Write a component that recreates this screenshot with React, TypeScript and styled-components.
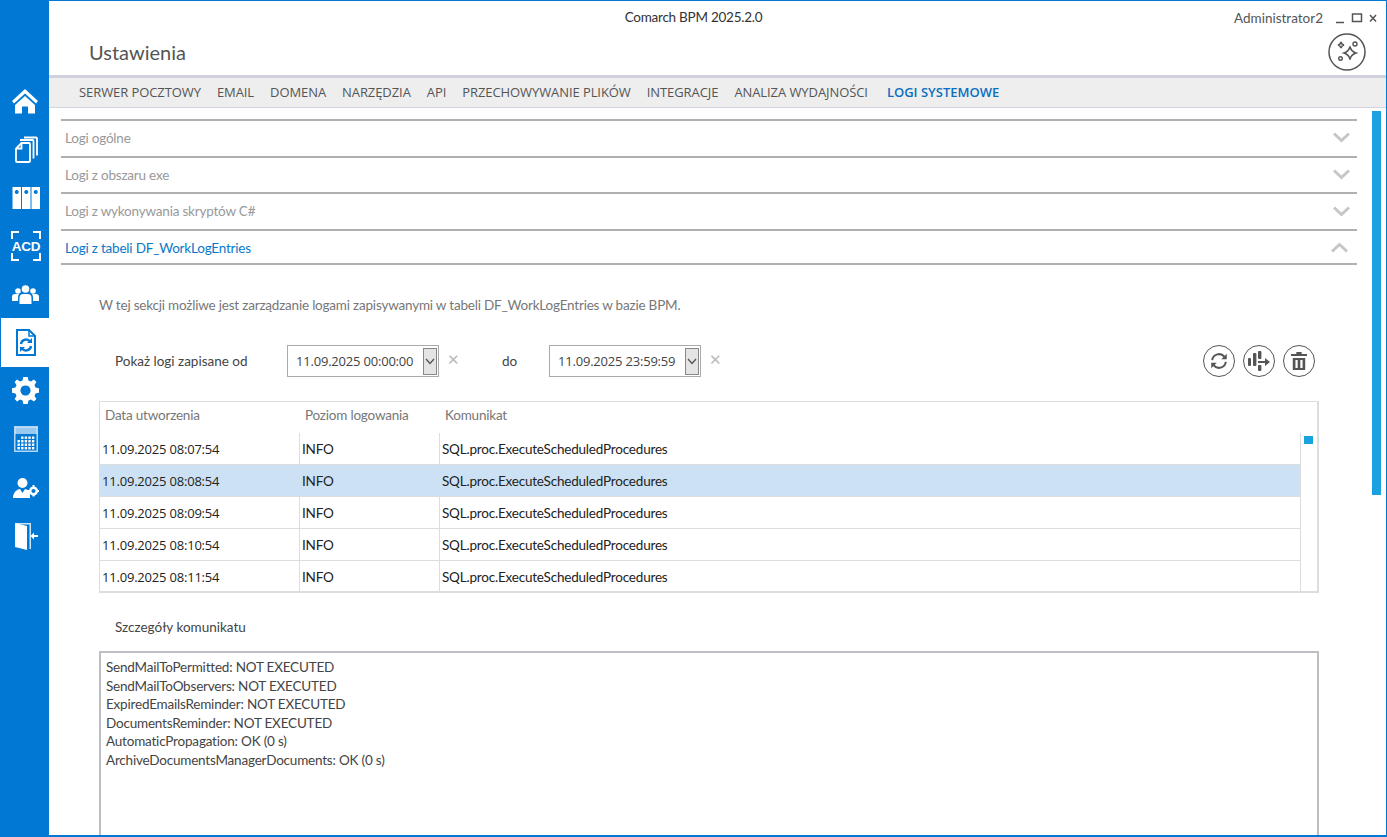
import React from "react";
import styled, { createGlobalStyle } from "styled-components";

const BLUE = "#0078d4";
const FONT = `Lato, "Open Sans", "Liberation Sans", sans-serif`;
const NARROW_FONT = `"Open Sans", "Noto Sans", "Liberation Sans", sans-serif`;

const GlobalStyle = createGlobalStyle`
  html, body {
    margin: 0;
    padding: 0;
    background: #fff;
    overflow: hidden;
  }
  * {
    box-sizing: border-box;
  }
`;

const tabs = [
  "SERWER POCZTOWY",
  "EMAIL",
  "DOMENA",
  "NARZĘDZIA",
  "API",
  "PRZECHOWYWANIE PLIKÓW",
  "INTEGRACJE",
  "ANALIZA WYDAJNOŚCI",
  "LOGI SYSTEMOWE",
];

const sections = [
  { title: "Logi ogólne", open: false },
  { title: "Logi z obszaru exe", open: false },
  { title: "Logi z wykonywania skryptów C#", open: false },
  { title: "Logi z tabeli DF_WorkLogEntries", open: true },
];

const rows = [
  "11.09.2025 08:07:54",
  "11.09.2025 08:08:54",
  "11.09.2025 08:09:54",
  "11.09.2025 08:10:54",
  "11.09.2025 08:11:54",
];

const details = [
  "SendMailToPermitted: NOT EXECUTED",
  "SendMailToObservers: NOT EXECUTED",
  "ExpiredEmailsReminder: NOT EXECUTED",
  "DocumentsReminder: NOT EXECUTED",
  "AutomaticPropagation: OK (0 s)",
  "ArchiveDocumentsManagerDocuments: OK (0 s)",
];

const HomeIcon = () => (
  <svg width="28" height="26" viewBox="1 0 28 26">
    <path d="M14 1 L27 13 L25 15.5 L14 5.5 L3 15.5 L1 13 Z" fill="#fff" />
    <path d="M14 8 L24 17 V25.5 H17 V18.5 H11 V25.5 H4 V17 Z" fill="#fff" />
  </svg>
);

const DocsIcon = () => (
  <svg width="24" height="27" viewBox="0 0 24 27" fill="none" stroke="#fff" strokeWidth="1.8">
    <path d="M7.5 7 L2 12.5 V25 a1 1 0 0 0 1 1 H15 a1 1 0 0 0 1 -1 V8 a1 1 0 0 0 -1 -1 Z" />
    <path d="M7.5 7 V12.5 H2" />
    <path d="M6 4 H18.5 a1 1 0 0 1 1 1 V22.5" />
    <path d="M10 1.5 H22 a1 1 0 0 1 1 1 V19.5" />
  </svg>
);

const BindersIcon = () => (
  <svg width="29" height="22" viewBox="-1.5 0 29 22">
    <path
      fillRule="evenodd"
      fill="#fff"
      d="M0 0 H8.5 V22 H0 Z M4.25 3 a2 2 0 1 0 .01 0 Z M9.5 0 H18 V22 H9.5 Z M13.75 3 a2 2 0 1 0 .01 0 Z M19 0 H27.5 V22 H19 Z M23.25 3 a2 2 0 1 0 .01 0 Z"
    />
  </svg>
);

const AcdIcon = () => (
  <svg width="30" height="30" viewBox="0 0 30 30" fill="none" stroke="#fff" strokeWidth="2">
    <path d="M1 8 V1 H8 M22 1 H29 V8 M1 22 V29 H8 M22 29 H29 V22" />
    <text x="15" y="20" textAnchor="middle" fill="#fff" stroke="none" fontFamily="Liberation Sans" fontWeight="700" fontSize="13.5">
      ACD
    </text>
  </svg>
);

const PeopleIcon = () => (
  <svg width="27" height="19" viewBox="0 0 27 19" fill="#fff">
    <circle cx="13.5" cy="4" r="3.8" />
    <circle cx="6" cy="6" r="2.8" />
    <circle cx="21" cy="6" r="2.8" />
    <path d="M7.5 19 V13 a4 4 0 0 1 4 -4 H15.5 a4 4 0 0 1 4 4 V19 Z" />
    <path d="M0 16 V12 a3 3 0 0 1 3 -3 H7 a6 6 0 0 0 -1 3.5 V16 Z" />
    <path d="M27 16 V12 a3 3 0 0 0 -3 -3 H20 a6 6 0 0 1 1 3.5 V16 Z" />
  </svg>
);

const LogDocIcon = () => (
  <svg width="20" height="27" viewBox="0 0 20 27" fill="none">
    <path d="M1 1 H13 L19 7 V26 H1 Z" stroke={BLUE} strokeWidth="2" />
    <path d="M13 1 V7 H19" stroke={BLUE} strokeWidth="1.5" />
    <path d="M5 15 a5 5 0 0 1 8.5 -3" stroke={BLUE} strokeWidth="2.4" />
    <path d="M16 9 V14 H11 Z" fill={BLUE} />
    <path d="M15 17 a5 5 0 0 1 -8.5 3" stroke={BLUE} strokeWidth="2.4" />
    <path d="M4 23 V18 H9 Z" fill={BLUE} />
  </svg>
);

const GearIcon = () => (
  <svg width="27" height="27" viewBox="0 0 24 24" fill="#fff">
    <path
      fillRule="evenodd"
      d="M10 0 H14 L14.6 3.1 L16.9 4 L19.5 2.3 L21.7 4.5 L20 7.1 L20.9 9.4 L24 10 V14 L20.9 14.6 L20 16.9 L21.7 19.5 L19.5 21.7 L16.9 20 L14.6 20.9 L14 24 H10 L9.4 20.9 L7.1 20 L4.5 21.7 L2.3 19.5 L4 16.9 L3.1 14.6 L0 14 V10 L3.1 9.4 L4 7.1 L2.3 4.5 L4.5 2.3 L7.1 4 L9.4 3.1 Z M12 7.5 a4.5 4.5 0 1 0 .01 0 Z"
    />
  </svg>
);

const CalendarIcon = () => (
  <svg width="24" height="26" viewBox="0 0 24 26">
    <path d="M0.75 .75 H23.25 V25.25 H.75 Z" fill="none" stroke="#fff" strokeOpacity=".7" strokeWidth="1.5" />
    <rect x="1" y="1" width="22" height="7" fill="#fff" fillOpacity=".6" />
    {[0, 1, 2, 3].map((r) =>
      [0, 1, 2, 3, 4].map((c) =>
        r === 0 && c === 0 ? null : (
          <rect key={`${r}-${c}`} x={3.5 + c * 3.6} y={10.5 + r * 3.5} width="2.4" height="2.4" fill="#fff" />
        )
      )
    )}
  </svg>
);

const AdminIcon = () => (
  <svg width="26" height="20" viewBox="0 0 26 20" fill="#fff">
    <circle cx="9.5" cy="5" r="5" />
    <path d="M0 20 C0 14 4 11.5 7 11 L9.5 15 L12 11 C14 11.3 16 12.5 17 14.5 V20 Z" />
    <path fillRule="evenodd" d="M20.5 8.5 a4.5 4.5 0 1 0 .01 0 Z M20.5 11 a2 2 0 1 1 -.01 0 Z" />
    <path d="M19.5 7 h2 v2 h-2 Z M19.5 16.5 h2 v2 h-2 Z M15 12 h2 v2 h-2 Z M24 12 h2 v2 h-2 Z" />
  </svg>
);

const ExitIcon = () => (
  <svg width="24" height="28" viewBox="0 0 24 28">
    <path d="M1 1 H17 V27 H15.5 V2.5 H1 Z" fill="#fff" fillOpacity=".8" />
    <path d="M1 1 L13 4 V28 L1 25 Z" fill="#fff" />
    <path d="M24 13 H20 V10.5 L16.5 14 L20 17.5 V15 H24 Z" fill="#fff" />
  </svg>
);

const navIcons = [
  <HomeIcon />,
  <DocsIcon />,
  <BindersIcon />,
  <AcdIcon />,
  <PeopleIcon />,
  <LogDocIcon />,
  <GearIcon />,
  <CalendarIcon />,
  <AdminIcon />,
  <ExitIcon />,
];

const SparkleIcon = () => (
  <svg width="38" height="38" viewBox="0 0 38 38" fill="none" stroke="#555">
    <circle cx="19" cy="19" r="18" strokeWidth="1.5" />
    <path d="M22 13.5 Q23 18.5 28 20 Q23 21.5 22 26.5 Q21 21.5 16 20 Q21 18.5 22 13.5 Z" strokeWidth="1.5" />
    <path d="M13 9 Q13.6 11.5 16 12 Q13.6 12.5 13 15 Q12.4 12.5 10 12 Q12.4 11.5 13 9 Z" strokeWidth="1.5" />
    <circle cx="27" cy="11" r="2" strokeWidth="1.4" />
    <circle cx="12.5" cy="25.5" r="1.8" strokeWidth="1.4" />
  </svg>
);

const RefreshIcon = () => (
  <svg width="20" height="20" viewBox="0 0 22 22" fill="none" stroke="#555" strokeWidth="2.2">
    <path d="M3.5 10 a7.6 7.6 0 0 1 13.5 -3.6" />
    <path d="M19.5 3 V9 H13.5 Z" fill="#555" stroke="none" />
    <path d="M18.5 12 a7.6 7.6 0 0 1 -13.5 3.6" />
    <path d="M2.5 19 V13 H8.5 Z" fill="#555" stroke="none" />
  </svg>
);

const MoveIcon = () => (
  <svg width="24" height="22" viewBox="0 0 24 22" fill="#555">
    <rect x="1" y="8" width="3" height="8" rx="1" />
    <rect x="6" y="3" width="3.4" height="13" rx="1" />
    <rect x="11" y="1" width="3.4" height="8" rx="1" />
    <rect x="11" y="15" width="3.4" height="6" rx="1" />
    <path d="M11 11 H18 V8 L23 12 L18 16 V13 H11 Z" />
  </svg>
);

const TrashIcon = () => (
  <svg width="16" height="18" viewBox="0 0 18 20" fill="#555">
    <path d="M6 0 H12 V2 H18 V4.5 H0 V2 H6 Z" />
    <path fillRule="evenodd" d="M2 6.5 H16 V20 H2 Z M5 9 V18 H7.5 V9 Z M10.5 9 V18 H13 V9 Z" />
  </svg>
);

const Chevron = ({ up }: { up?: boolean }) => (
  <svg width="17" height="11" viewBox="0 0 17 11" fill="none" stroke="#c6c6c6" strokeWidth="3">
    <path d={up ? "M1 9.5 L8.5 2.5 L16 9.5" : "M1 1.5 L8.5 8.5 L16 1.5"} />
  </svg>
);

const Window = styled.div`
  width: 1387px;
  height: 837px;
  display: flex;
  overflow: hidden;
  border: 1px solid ${BLUE};
  border-bottom-width: 2px;
  font-family: ${FONT};
  font-size: 13.5px;
  letter-spacing: -0.2px;
  background: #fff;
`;

const Sidebar = styled.nav`
  width: 48px;
  flex: none;
  background: ${BLUE};
  display: flex;
  flex-direction: column;
  padding-top: 76px;
`;

const NavItem = styled.div<{ $active?: boolean }>`
  height: 48.3px;
  display: flex;
  align-items: center;
  justify-content: center;
  padding-left: 1px;
  background: ${(p) => (p.$active ? "#fff" : "transparent")};
`;

const Main = styled.main`
  flex: 1;
  min-width: 0;
  display: flex;
  flex-direction: column;
`;

const TitleBar = styled.header`
  height: 74px;
  flex: none;
  display: grid;
  grid-template-columns: 1fr auto;
  padding: 0 9px 0 40px;
`;

const TitleLeft = styled.div`
  display: flex;
  flex-direction: column;
`;

const AppName = styled.div`
  text-align: center;
  line-height: 18px;
  margin-top: 7px;
  padding-left: 64px;
  letter-spacing: -0.25px;
  color: #333;
`;

const PageTitle = styled.h1`
  margin: 12px 0 0;
  font-size: 20px;
  font-weight: 400;
  letter-spacing: 0;
  line-height: 28px;
  color: #555;
`;

const TitleRight = styled.div`
  display: flex;
  flex-direction: column;
  align-items: flex-end;
`;

const UserRow = styled.div`
  display: flex;
  align-items: center;
  gap: 12px;
  height: 20px;
  margin-top: 7px;
  letter-spacing: 0;
  color: #555;
`;

const WinControls = styled.div`
  display: flex;
  align-items: center;
`;

const AiButton = styled.div`
  display: flex;
  margin: 5px 11px 0 0;
`;

const TabBar = styled.div`
  height: 33px;
  flex: none;
  display: flex;
  align-items: center;
  gap: 16px;
  padding: 0 0 1px 30px;
  background: #eeeeee;
  border-top: 3px solid #d0d0de;
  border-bottom: 1px solid #d4d4de;
  white-space: nowrap;
`;

const Tab = styled.span<{ $active?: boolean }>`
  font-family: ${NARROW_FONT};
  font-size: 13px;
  letter-spacing: ${(p) => (p.$active ? "0" : "-0.08px")};
  margin-left: ${(p) => (p.$active ? 3 : 0)}px;
  font-weight: ${(p) => (p.$active ? 600 : 400)};
  color: ${(p) => (p.$active ? "#0a6fc2" : "#555")};
`;

const Body = styled.div`
  flex: 1;
  min-height: 0;
  display: flex;
  overflow: hidden;
`;

const Content = styled.div`
  width: 1308px;
  flex: none;
  padding: 11px 0 0 12px;
`;

const Track = styled.div`
  flex: none;
  width: 9px;
  height: 384px;
  margin: 3px 0 0 15px;
  background: #1ba1e2;
`;

const Section = styled.div<{ $open?: boolean }>`
  width: 1296px;
  height: ${(p) => (p.$open ? 36 : 36.7)}px;
  display: flex;
  align-items: center;
  justify-content: space-between;
  padding: ${(p) => (p.$open ? 1 : 0)}px ${(p) => (p.$open ? 9 : 7)}px ${(p) => (p.$open ? 0 : 1)}px 4px;
  border-top: 2px solid #b0b0b0;
  border-bottom: ${(p) => (p.$open ? "2px solid #b0b0b0" : "none")};
  color: ${(p) => (p.$open ? "#0a78c8" : "#999")};
`;

const Panel = styled.div`
  padding-left: 38px;
`;

const Description = styled.p`
  margin: 31px 0 0;
  line-height: 18px;
  color: #777;
`;

const FilterRow = styled.div`
  display: flex;
  align-items: center;
  width: 1216px;
  height: 34px;
  margin-top: 30px;
  padding-left: 16px;
  letter-spacing: 0;
  color: #444;
`;

const FilterLabel = styled.span<{ $width: number }>`
  width: ${(p) => p.$width}px;
  flex: none;
`;

const DateField = styled.div`
  width: 152px;
  height: 32px;
  flex: none;
  display: flex;
  align-items: center;
  justify-content: space-between;
  padding: 1px 1px 1px 8px;
  border: 1px solid #aaa;
  font-family: ${NARROW_FONT};
  font-size: 13px;
  letter-spacing: -0.2px;
  white-space: nowrap;
  color: #444;
`;

const DropButton = styled.div`
  width: 14px;
  height: 27px;
  display: flex;
  align-items: center;
  justify-content: center;
  background: #e4e4e4;
  border: 1px solid #888;
`;

const Clear = styled.span<{ $gap: number }>`
  flex: none;
  width: ${(p) => p.$gap}px;
  padding-left: 8px;
  margin-top: -4px;
  font-size: 15px;
  color: #bbb;
`;

const Actions = styled.div`
  margin-left: auto;
  display: flex;
  gap: 8px;
`;

const RoundButton = styled.div`
  width: 32px;
  height: 32px;
  border-radius: 50%;
  border: 1.5px solid #555;
  display: flex;
  align-items: center;
  justify-content: center;
`;

const TableBox = styled.div`
  position: relative;
  width: 1220px;
  height: 192px;
  margin-top: 23px;
  overflow: hidden;
  border: 2px solid #ddd;
  border-width: 1px 2px 2px 1px;
`;

const Cols = "200px 140px 861px 1fr";

const HeadRow = styled.div`
  display: grid;
  grid-template-columns: ${Cols};
  height: 31px;
  align-items: center;
  color: #777;
`;

const HeadCell = styled.span`
  padding: 0 0 6px 5px;
`;

const Row = styled.div`
  display: grid;
  grid-template-columns: ${Cols};
  height: 32px;
  color: #222;
`;

const Cell = styled.span<{ $selected?: boolean }>`
  display: flex;
  align-items: center;
  padding-left: 2px;
  border-right: 1px solid #ddd;
  border-bottom: 1px solid #ddd;
  background: ${(p) => (p.$selected ? "#cce2f4" : "transparent")};
`;

const DateCell = styled(Cell)`
  font-family: ${NARROW_FONT};
  font-size: 13px;
`;

const ScrollThumb = styled.span`
  position: absolute;
  top: 34px;
  right: 4px;
  width: 9px;
  height: 8px;
  background: #1ba1e2;
`;

const DetailsLabel = styled.div`
  margin: 25px 0 0 16px;
  line-height: 18px;
  letter-spacing: 0;
  color: #444;
`;

const DetailsBox = styled.div`
  width: 1220px;
  height: 220px;
  margin-top: 15px;
  padding: 5px;
  border: 2px solid #bdbdc4;
  border-bottom: none;
  line-height: 18.6px;
  color: #444;
`;

export default function App() {
  return (
    <Window>
      <GlobalStyle />
      <Sidebar>
        {navIcons.map((icon, i) => (
          <NavItem key={i} $active={i === 5}>
            {icon}
          </NavItem>
        ))}
      </Sidebar>
      <Main>
        <TitleBar>
          <TitleLeft>
            <AppName>Comarch BPM 2025.2.0</AppName>
            <PageTitle>Ustawienia</PageTitle>
          </TitleLeft>
          <TitleRight>
            <UserRow>
              Administrator2
              <WinControls>
                <svg width="42" height="12" viewBox="0 0 42 12" fill="none" stroke="#555" strokeWidth="1.5">
                  <path d="M1 10.5 H9" />
                  <path d="M17.5 2 H26.5 V9.5 H17.5 Z" />
                  <path d="M35 3 L41 9.5 M41 3 L35 9.5" />
                </svg>
              </WinControls>
            </UserRow>
            <AiButton>
              <SparkleIcon />
            </AiButton>
          </TitleRight>
        </TitleBar>
        <TabBar>
          {tabs.map((t) => (
            <Tab key={t} $active={t === "LOGI SYSTEMOWE"}>
              {t}
            </Tab>
          ))}
        </TabBar>
        <Body>
          <Content>
            {sections.map((s) => (
              <Section key={s.title} $open={s.open}>
                {s.title}
                <Chevron up={s.open} />
              </Section>
            ))}
            <Panel>
              <Description>
                W tej sekcji możliwe jest zarządzanie logami zapisywanymi w tabeli DF_WorkLogEntries w bazie BPM.
              </Description>
              <FilterRow>
                <FilterLabel $width={172}>Pokaż logi zapisane od</FilterLabel>
                <DateField>
                  11.09.2025 00:00:00
                  <DropButton>
                    <svg width="10" height="7" viewBox="0 0 10 7" fill="none" stroke="#555" strokeWidth="1.3">
                      <path d="M1 1 L5 5.5 L9 1" />
                    </svg>
                  </DropButton>
                </DateField>
                <Clear $gap={63}>✕</Clear>
                <FilterLabel $width={47}>do</FilterLabel>
                <DateField>
                  11.09.2025 23:59:59
                  <DropButton>
                    <svg width="10" height="7" viewBox="0 0 10 7" fill="none" stroke="#555" strokeWidth="1.3">
                      <path d="M1 1 L5 5.5 L9 1" />
                    </svg>
                  </DropButton>
                </DateField>
                <Clear $gap={40}>✕</Clear>
                <Actions>
                  <RoundButton>
                    <RefreshIcon />
                  </RoundButton>
                  <RoundButton>
                    <MoveIcon />
                  </RoundButton>
                  <RoundButton>
                    <TrashIcon />
                  </RoundButton>
                </Actions>
              </FilterRow>
              <TableBox>
                <HeadRow>
                  <HeadCell>Data utworzenia</HeadCell>
                  <HeadCell>Poziom logowania</HeadCell>
                  <HeadCell>Komunikat</HeadCell>
                </HeadRow>
                {rows.map((date, i) => (
                  <Row key={date}>
                    <DateCell $selected={i === 1}>{date}</DateCell>
                    <Cell $selected={i === 1}>INFO</Cell>
                    <Cell $selected={i === 1}>SQL.proc.ExecuteScheduledProcedures</Cell>
                  </Row>
                ))}
                <ScrollThumb />
              </TableBox>
              <DetailsLabel>Szczegóły komunikatu</DetailsLabel>
              <DetailsBox>
                {details.map((d) => (
                  <div key={d}>{d}</div>
                ))}
              </DetailsBox>
            </Panel>
          </Content>
          <Track />
        </Body>
      </Main>
    </Window>
  );
}
